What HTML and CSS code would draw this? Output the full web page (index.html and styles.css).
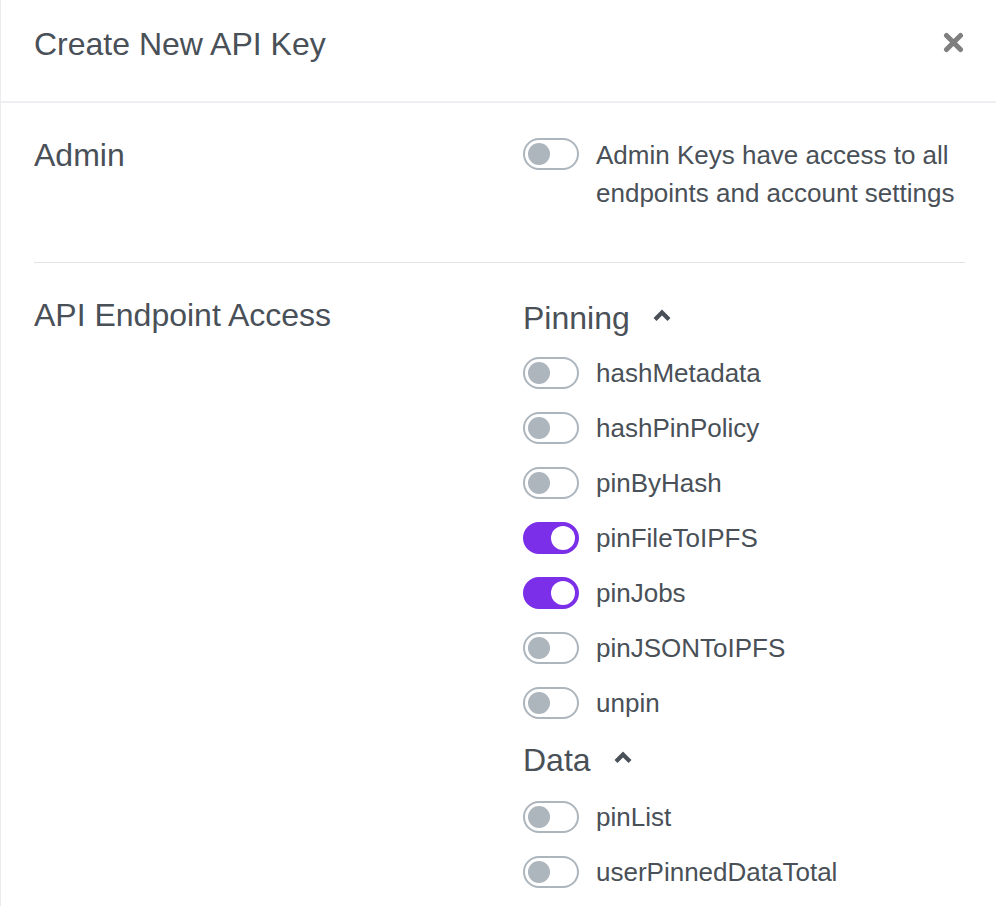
FILE: index.html
```html
<!DOCTYPE html>
<html lang="en">
<head>
<meta charset="utf-8">
<title>Create New API Key</title>
<link rel="stylesheet" href="styles.css">
</head>
<body>
<div class="modal">
  <div class="modal-header">
    <h1 class="modal-title">Create New API Key</h1>
    <button class="close" aria-label="Close">
      <svg width="21" height="21" viewBox="0 0 21 21"><path d="M3.5 3.5 L17.5 17.5 M17.5 3.5 L3.5 17.5" stroke="#7f7f7f" stroke-width="5" stroke-linecap="round"/></svg>
    </button>
  </div>
  <div class="section admin">
    <div class="label">Admin</div>
    <div class="opts">
      <label class="row">
        <span class="toggle"></span>
        <span class="text">Admin Keys have access to all<br>endpoints and account settings</span>
      </label>
    </div>
  </div>
  <div class="section">
    <div class="label">API Endpoint Access</div>
    <div class="opts">
      <div class="group">Pinning <svg class="chev" width="20" height="14" viewBox="0 0 20 14"><polyline points="3,11.5 10,4.5 17,11.5" fill="none" stroke="#495057" stroke-width="4.2" stroke-linejoin="miter"/></svg></div>
      <label class="row"><span class="toggle"></span><span class="text">hashMetadata</span></label>
      <label class="row"><span class="toggle"></span><span class="text">hashPinPolicy</span></label>
      <label class="row"><span class="toggle"></span><span class="text">pinByHash</span></label>
      <label class="row"><span class="toggle on"></span><span class="text">pinFileToIPFS</span></label>
      <label class="row"><span class="toggle on"></span><span class="text">pinJobs</span></label>
      <label class="row"><span class="toggle"></span><span class="text">pinJSONToIPFS</span></label>
      <label class="row"><span class="toggle"></span><span class="text">unpin</span></label>
      <div class="group group-data">Data <svg class="chev" width="20" height="14" viewBox="0 0 20 14"><polyline points="3,11.5 10,4.5 17,11.5" fill="none" stroke="#495057" stroke-width="4.2" stroke-linejoin="miter"/></svg></div>
      <label class="row"><span class="toggle"></span><span class="text">pinList</span></label>
      <label class="row"><span class="toggle"></span><span class="text">userPinnedDataTotal</span></label>
    </div>
  </div>
</div>
</body>
</html>
```
FILE: styles.css
```css
* { box-sizing: border-box; }
html, body { margin: 0; padding: 0; background: #fff; }
body {
  font-family: "Liberation Sans", Arial, Helvetica, sans-serif;
  color: #495057;
  height: 906px;
  overflow: hidden;
}
.modal {
  border-left: 1px solid #ececec;
  min-height: 906px;
}
.modal-header {
  display: flex;
  justify-content: space-between;
  align-items: flex-start;
  padding: 20px 32px 0 33px;
  height: 103px;
  border-bottom: 2px solid #efeff3;
}
.modal-title {
  margin: 0;
  font-size: 32px;
  font-weight: 400;
  line-height: 48px;
}
.close {
  border: 0;
  background: none;
  padding: 0;
  margin-top: 12px;
  width: 21px;
  height: 21px;
  cursor: pointer;
}
.close svg { display: block; }
.section {
  display: grid;
  grid-template-columns: 489px 1fr;
  margin: 0 31px 0 33px;
  padding-top: 28px;
}
.section.admin {
  padding-bottom: 50px;
  border-bottom: 1px solid #e2e2e2;
}
.label {
  font-size: 32px;
  line-height: 48px;
}
.opts {
  display: flex;
  flex-direction: column;
}
.admin .opts { padding-top: 5px; }
.row {
  display: flex;
  align-items: center;
  gap: 17px;
  font-size: 26px;
  line-height: 38px;
  margin-bottom: 17px;
}
.admin .row { align-items: flex-start; margin-bottom: 0; }
.admin .toggle { margin-top: 2px; }
.group {
  display: flex;
  align-items: center;
  font-size: 32px;
  line-height: 48px;
  margin: 0 0 12px;
}
.group-data {
  margin: -3px 0 14px;
}
.section:not(.admin) .opts { padding-top: 3px; }
.chev { margin-left: 22px; margin-top: -6px; }
.toggle {
  position: relative;
  flex: none;
  width: 56px;
  height: 32px;
  border: 2px solid #adb5bd;
  border-radius: 16px;
  background: #fff;
}
.toggle::after {
  content: "";
  position: absolute;
  top: 3px;
  left: 3px;
  width: 22px;
  height: 22px;
  border-radius: 50%;
  background: #adb5bd;
}
.toggle.on {
  background: #7b2fe8;
  border-color: #7b2fe8;
}
.toggle.on::after {
  left: auto;
  right: 2px;
  top: 2px;
  width: 24px;
  height: 24px;
  background: #fff;
}
```
